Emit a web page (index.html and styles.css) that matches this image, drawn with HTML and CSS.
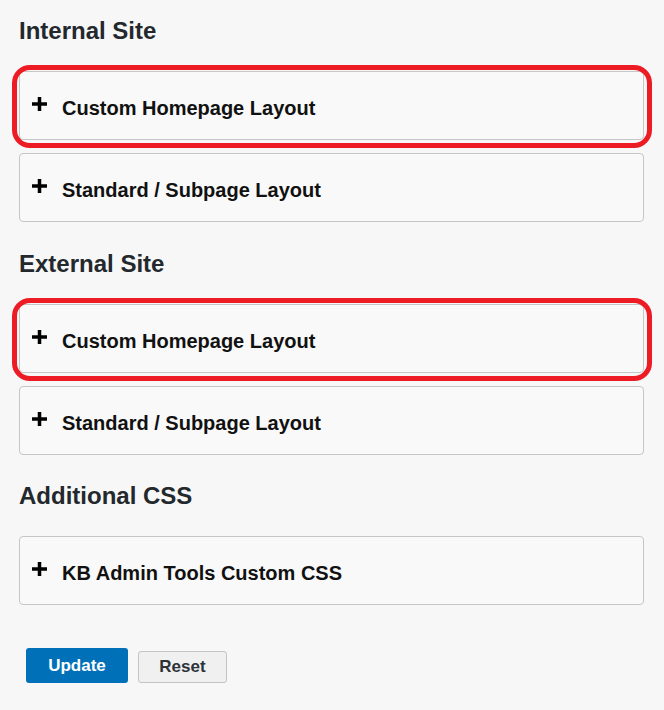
FILE: index.html
```html
<!DOCTYPE html>
<html>
<head>
<meta name="viewport" content="width=device-width, initial-scale=1">
<link rel="stylesheet" href="styles.css">
</head>
<body>

<div class="settings">
    <div class="section">
        <h2 class="section-title">Internal Site</h2>
        <div class="panel highlight">
            <svg class="plus" viewBox="0 0 15 14"><rect x="0" y="5.25" width="15" height="3.5"/><rect x="5.75" y="0" width="3.5" height="14"/></svg>
            <span class="panel-title">Custom Homepage Layout</span>
        </div>
        <div class="panel">
            <svg class="plus" viewBox="0 0 15 14"><rect x="0" y="5.25" width="15" height="3.5"/><rect x="5.75" y="0" width="3.5" height="14"/></svg>
            <span class="panel-title">Standard / Subpage Layout</span>
        </div>
    </div>

    <div class="section">
        <h2 class="section-title">External Site</h2>
        <div class="panel highlight">
            <svg class="plus" viewBox="0 0 15 14"><rect x="0" y="5.25" width="15" height="3.5"/><rect x="5.75" y="0" width="3.5" height="14"/></svg>
            <span class="panel-title">Custom Homepage Layout</span>
        </div>
        <div class="panel">
            <svg class="plus" viewBox="0 0 15 14"><rect x="0" y="5.25" width="15" height="3.5"/><rect x="5.75" y="0" width="3.5" height="14"/></svg>
            <span class="panel-title">Standard / Subpage Layout</span>
        </div>
    </div>

    <div class="section">
        <h2 class="section-title">Additional CSS</h2>
        <div class="panel">
            <svg class="plus" viewBox="0 0 15 14"><rect x="0" y="5.25" width="15" height="3.5"/><rect x="5.75" y="0" width="3.5" height="14"/></svg>
            <span class="panel-title">KB Admin Tools Custom CSS</span>
        </div>
    </div>

    <div class="actions">
        <span class="btn btn-primary">Update</span>
        <span class="btn btn-secondary">Reset</span>
    </div>
</div>

</body>
</html>
```

FILE: styles.css
```css
/* Page */
body {
    margin: 0;
    background: #f7f7f7;
    font-family: "Liberation Sans", Arial, sans-serif;
}

* {
    box-sizing: border-box;
}

.settings {
    padding: 0 20px 0 19px;
}

/* One group of panels */
.section {
    display: flex;
    flex-direction: column;
    gap: 13px;
    padding-top: 17px;
    margin-bottom: 10.5px;
}

.section-title {
    margin: 0 0 13px 0;
    font-size: 24px;
    line-height: 28px;
    font-weight: bold;
    color: #23282d;
}

/* Collapsible panel */
.panel {
    position: relative;
    display: flex;
    align-items: flex-start;
    height: 69px;
    padding: 24px 12px 0 12px;
    background: #f9f9f9;
    border: 1px solid #c6c6c6;
    border-radius: 4px;
    cursor: pointer;
}

.plus {
    width: 15px;
    height: 14px;
    margin-top: 1px;
    margin-right: 15px;
    fill: #000;
    flex-shrink: 0;
}

.panel-title {
    font-size: 20px;
    line-height: 24px;
    font-weight: bold;
    color: #111;
}

/* Red annotation frame drawn over the panel */
.panel.highlight::after {
    content: "";
    position: absolute;
    top: -7px;
    left: -8px;
    right: -9px;
    bottom: -9px;
    border: 5px solid #ed1c24;
    border-radius: 18px;
    pointer-events: none;
}

/* Buttons */
.actions {
    display: flex;
    align-items: flex-end;
    gap: 10px;
    padding: 32.5px 0 0 7px;
}

.btn {
    display: flex;
    align-items: center;
    justify-content: center;
    font-size: 17px;
    font-weight: bold;
    border-radius: 3px;
    cursor: pointer;
}

.btn-primary {
    width: 102px;
    height: 35px;
    background: #0071b9;
    color: #fff;
}

.btn-secondary {
    width: 89px;
    height: 32px;
    background: #f0f0f0;
    border: 1px solid #c3c4c7;
    color: #2c3338;
}
```
